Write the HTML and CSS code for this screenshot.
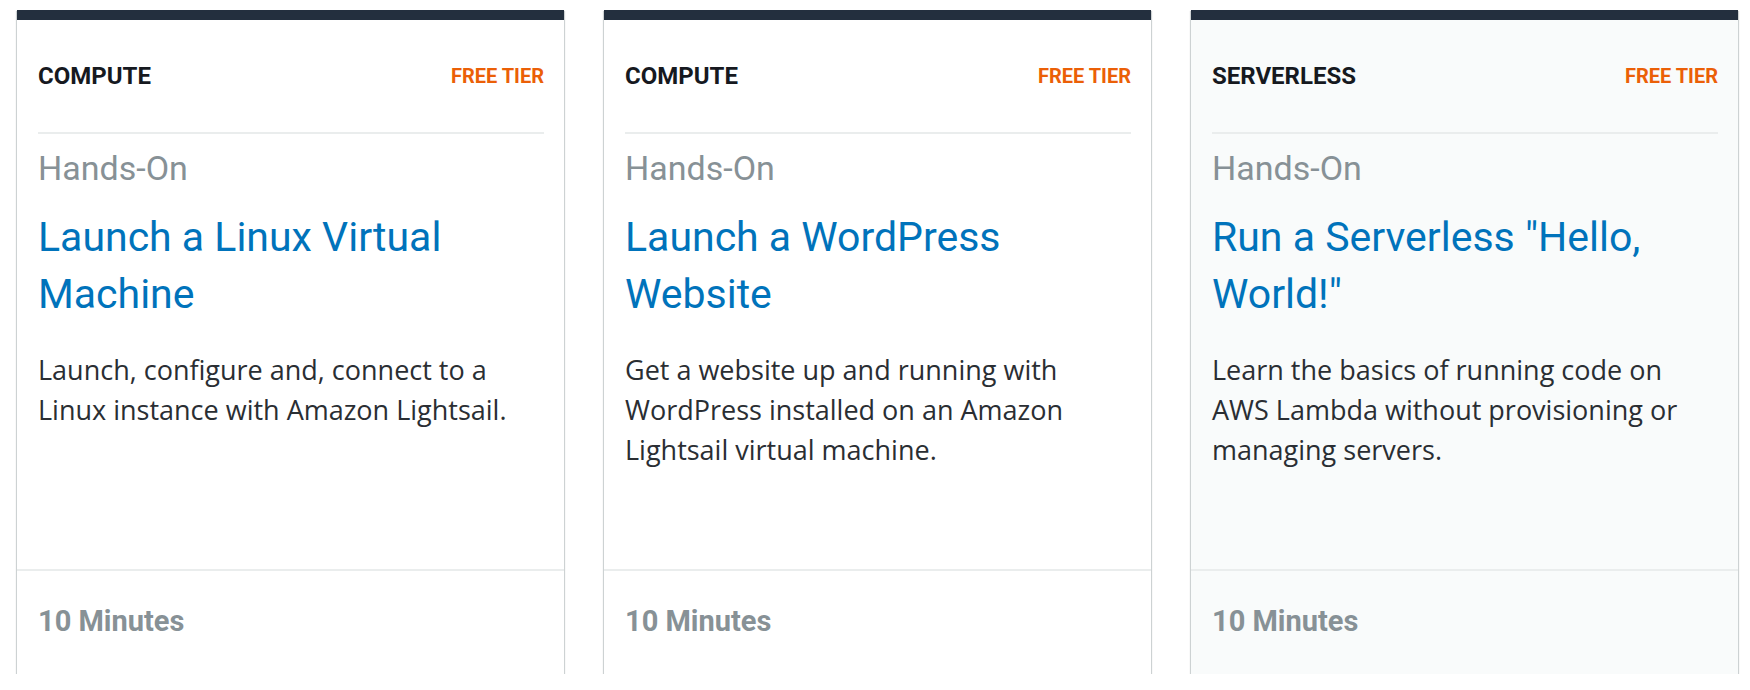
FILE: index.html
```html
<!DOCTYPE html>
<html lang="en">
<head>
<meta charset="utf-8">
<title>Hands-On Tutorials</title>
<link rel="stylesheet" href="styles.css">
</head>
<body>
<div class="cards">
  <div class="card">
    <div class="card-head">
      <span class="category">COMPUTE</span>
      <span class="tier">FREE TIER</span>
    </div>
    <div class="card-body">
      <div class="kind">Hands-On</div>
      <a class="title" href="#">Launch a Linux Virtual Machine</a>
      <p class="desc">Launch, configure and, connect to a Linux instance with Amazon Lightsail.</p>
    </div>
    <div class="card-foot">10 Minutes</div>
  </div>
  <div class="card">
    <div class="card-head">
      <span class="category">COMPUTE</span>
      <span class="tier">FREE TIER</span>
    </div>
    <div class="card-body">
      <div class="kind">Hands-On</div>
      <a class="title" href="#">Launch a WordPress Website</a>
      <p class="desc">Get a website up and running with WordPress installed on an Amazon Lightsail virtual machine.</p>
    </div>
    <div class="card-foot">10 Minutes</div>
  </div>
  <div class="card card-hover">
    <div class="card-head">
      <span class="category">SERVERLESS</span>
      <span class="tier">FREE TIER</span>
    </div>
    <div class="card-body">
      <div class="kind">Hands-On</div>
      <a class="title" href="#">Run a Serverless "Hello, World!"</a>
      <p class="desc">Learn the basics of running code on AWS Lambda without provisioning or managing servers.</p>
    </div>
    <div class="card-foot">10 Minutes</div>
  </div>
</div>
</body>
</html>
```

FILE: styles.css
```css
html, body {
  margin: 0;
  padding: 0;
  background: #ffffff;
}

body {
  font-family: Roboto, "Liberation Sans", Arial, sans-serif;
}

.cards {
  display: grid;
  grid-template-columns: repeat(3, 547px);
  column-gap: 40px;
  padding: 10px 0 0 17px;
}

.card {
  box-sizing: border-box;
  height: 664px;
  display: flex;
  flex-direction: column;
  background: #ffffff;
  border-top: 10px solid #232f3e;
  box-shadow: 0 1px 1px 0 rgba(0, 28, 36, 0.3),
              1px 1px 1px 0 rgba(0, 28, 36, 0.15),
              -1px 1px 1px 0 rgba(0, 28, 36, 0.15);
}

.card-hover {
  background: #f9fbfb;
}

.card-head {
  height: 112px;
  margin: 0 20px 0 21px;
  display: flex;
  align-items: center;
  justify-content: space-between;
  border-bottom: 2px solid #eaeded;
}

.category {
  font-size: 24px;
  font-weight: 700;
  color: #16191f;
  line-height: 30px;
}

.tier {
  font-size: 20px;
  font-weight: 700;
  color: #eb5f07;
  line-height: 30px;
}

.card-body {
  flex: 1;
  padding: 14px 20px 0 21px;
}

.kind {
  font-size: 34px;
  line-height: 40px;
  color: #879196;
}

.title {
  display: block;
  margin-top: 21px;
  font-size: 41px;
  line-height: 57px;
  color: #0073bb;
  text-decoration: none;
}

.desc {
  max-width: 485px;
  margin: 27px 0 0 0;
  font-family: "Open Sans", Roboto, Arial, sans-serif;
  font-size: 27px;
  line-height: 40px;
  color: #2a2e33;
}

.card-foot {
  height: 105px;
  box-sizing: border-box;
  margin: 0;
  padding: 0 20px 4px 21px;
  display: flex;
  align-items: center;
  border-top: 2px solid #eaeded;
  font-size: 29px;
  font-weight: 700;
  color: #879196;
}
```
